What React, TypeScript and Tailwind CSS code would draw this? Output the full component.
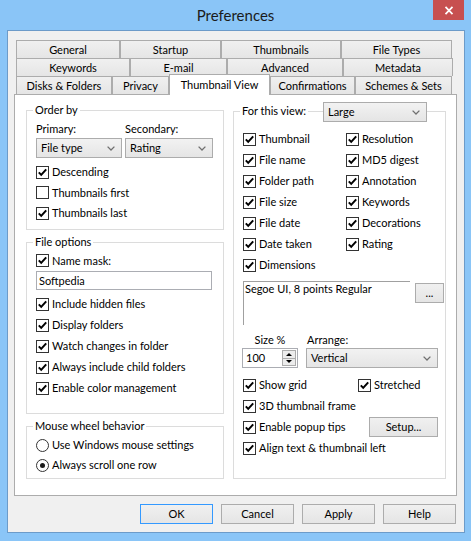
import React from "react";

function Check({ checked = true }: { checked?: boolean }) {
  return (
    <span className="w-[13px] h-[13px] shrink-0 border border-[#333333] bg-white flex items-center justify-center">
      {checked && (
        <svg width="11" height="11" viewBox="0 0 11 11">
          <path d="M1.8 5.4 L4.2 7.9 L9.2 2.3" stroke="#000" strokeWidth="2" fill="none" />
        </svg>
      )}
    </span>
  );
}

function CheckRow({
  label,
  checked = true,
  h = "h-[21px]",
  className = "",
}: {
  label: string;
  checked?: boolean;
  h?: string;
  className?: string;
}) {
  return (
    <div className={`flex items-center whitespace-nowrap ${h} ${className}`}>
      <Check checked={checked} />
      <span className="ml-[3px]">{label}</span>
    </div>
  );
}

function Radio({ label, selected = false }: { label: string; selected?: boolean }) {
  return (
    <div className="flex items-center h-[20px] whitespace-nowrap">
      <span className="w-[13px] h-[13px] shrink-0 rounded-full border border-[#333333] bg-white flex items-center justify-center">
        {selected && <span className="w-[5px] h-[5px] rounded-full bg-[#1a1a1a]" />}
      </span>
      <span className="ml-[3px]">{label}</span>
    </div>
  );
}

function Chevron() {
  return (
    <svg width="8" height="5" viewBox="0 0 8 5">
      <path d="M0.6 0.6 L4 4 L7.4 0.6" stroke="#707070" strokeWidth="1.3" fill="none" />
    </svg>
  );
}

function Select({ value, className = "" }: { value: string; className?: string }) {
  return (
    <div
      className={`h-[20px] border border-[#acacac] bg-linear-to-b from-[#f2f2f2] to-[#e5e5e5] flex items-center justify-between pl-[4px] pr-[6px] ${className}`}
    >
      <span>{value}</span>
      <Chevron />
    </div>
  );
}

function Btn({ label, className = "" }: { label: string; className?: string }) {
  return (
    <div
      className={`h-[20px] border bg-linear-to-b from-[#f0f0f0] to-[#e5e5e5] flex items-center justify-center ${className}`}
    >
      {label}
    </div>
  );
}

const row1 = [
  ["General", "w-[104px]"],
  ["Startup", "w-[101px]"],
  ["Thumbnails", "w-[120px]"],
  ["File Types", "w-[111px]"],
];
const row2 = [
  ["Keywords", "w-[114px]"],
  ["E-mail", "w-[97px]"],
  ["Advanced", "w-[116px]"],
  ["Metadata", "w-[110px]"],
];
const row3 = [
  ["Disks & Folders", "w-[96px]", false],
  ["Privacy", "w-[57px]", false],
  ["Thumbnail View", "w-[101px]", true],
  ["Confirmations", "w-[85px]", false],
  ["Schemes & Sets", "w-[97px]", false],
] as const;

function Tab({ label, w }: { label: string; w: string }) {
  return (
    <div
      className={`h-[18px] border border-b-0 border-[#acacac] bg-linear-to-b from-[#f0f0f0] to-[#e5e5e5] flex items-center justify-center whitespace-nowrap ${w}`}
    >
      {label}
    </div>
  );
}

export default function App() {
  return (
    <div className="w-[471px] h-[541px] bg-[#8ac5f7] font-['Lato',sans-serif] text-[11px] leading-[14px] text-black overflow-hidden">
      {/* title bar */}
      <div className="relative h-[30px] flex items-center justify-center">
        <span className="text-[15px] leading-[20px] text-[#1b1b1b]">Preferences</span>
        <div className="absolute right-[7px] top-0 w-[31px] h-[20px] bg-[#c75050] flex items-center justify-center">
          <svg width="10" height="9" viewBox="0 0 10 9">
            <path d="M1.5 0.8 L8.5 8.2 M8.5 0.8 L1.5 8.2" stroke="white" strokeWidth="1.7" />
          </svg>
        </div>
      </div>

      {/* client area */}
      <div className="ml-[7px] w-[458px] h-[503px] border border-[#6c9bc9] bg-[#f0f0f0] pt-[9px]">
        <div className="ml-[6px] w-[443px]">
          {/* tabs */}
          <div className="ml-[2px]">
            <div className="flex">
              {row1.map(([l, w]) => (
                <Tab key={l} label={l} w={w} />
              ))}
            </div>
            <div className="flex">
              {row2.map(([l, w]) => (
                <Tab key={l} label={l} w={w} />
              ))}
            </div>
            <div className="flex items-end h-[18px]">
              {row3.map(([l, w, sel]) =>
                sel ? (
                  <div
                    key={l}
                    className={`relative z-10 h-[21px] -mb-[1px] border border-b-0 border-[#acacac] bg-white flex items-center justify-center whitespace-nowrap ${w}`}
                  >
                    {l}
                  </div>
                ) : (
                  <Tab key={l} label={l} w={w} />
                )
              )}
            </div>
          </div>

          {/* panel */}
          <div className="h-[402px] border border-[#acacac] bg-white flex pl-[11px] pt-[8px]">
            {/* left column */}
            <div className="w-[198px] flex flex-col">
              <fieldset className="border border-[#dcdcdc] h-[127px] min-w-0">
                <legend className="ml-[6px] px-[2px] leading-[14px]">Order by</legend>
                <div className="pl-[9px] pt-[4px]">
                  <div className="grid grid-cols-[86px_88px] gap-x-[3px] gap-y-[1px]">
                    <div className="h-[16px] leading-[16px]">Primary:</div>
                    <div className="h-[16px] leading-[16px]">Secondary:</div>
                    <Select value="File type" />
                    <Select value="Rating" />
                  </div>
                  <div className="mt-[4px]">
                    <CheckRow label="Descending" h="h-[20.5px]" />
                    <CheckRow label="Thumbnails first" checked={false} h="h-[20.5px]" />
                    <CheckRow label="Thumbnails last" h="h-[20.5px]" />
                  </div>
                </div>
              </fieldset>

              <fieldset className="mt-[5px] border border-[#dcdcdc] h-[179px] min-w-0">
                <legend className="ml-[6px] px-[2px] leading-[14px]">File options</legend>
                <div className="pl-[9px] pt-[1px]">
                  <CheckRow label="Name mask:" />
                  <div className="h-[19px] w-[176px] border border-[#abadb3] bg-white pl-[2px] flex items-center">
                    Softpedia
                  </div>
                  <div className="mt-[3.5px]">
                    <CheckRow label="Include hidden files" />
                    <CheckRow label="Display folders" />
                    <CheckRow label="Watch changes in folder" />
                    <CheckRow label="Always include child folders" />
                    <CheckRow label="Enable color management" />
                  </div>
                </div>
              </fieldset>

              <fieldset className="mt-[5px] border border-[#dcdcdc] h-[60px] min-w-0">
                <legend className="ml-[6px] px-[2px] leading-[14px]">Mouse wheel behavior</legend>
                <div className="pl-[9px] pt-[2px]">
                  <Radio label="Use Windows mouse settings" />
                  <Radio label="Always scroll one row" selected />
                </div>
              </fieldset>
            </div>

            {/* right column */}
            <div className="relative ml-[9px] mt-[1px] w-[213px]">
              <fieldset className="border border-[#dcdcdc] h-[375px] min-w-0">
                <legend className="ml-[6px] px-[2px] leading-[14px]">For this view:</legend>
                <div className="pl-[9px] pt-[10.5px]">
                  <div className="flex">
                    <div className="w-[103px]">
                      <CheckRow label="Thumbnail" />
                      <CheckRow label="File name" />
                      <CheckRow label="Folder path" />
                      <CheckRow label="File size" />
                      <CheckRow label="File date" />
                      <CheckRow label="Date taken" />
                      <CheckRow label="Dimensions" />
                    </div>
                    <div>
                      <CheckRow label="Resolution" />
                      <CheckRow label="MD5 digest" />
                      <CheckRow label="Annotation" />
                      <CheckRow label="Keywords" />
                      <CheckRow label="Decorations" />
                      <CheckRow label="Rating" />
                    </div>
                  </div>

                  <div className="flex items-start mt-[5.5px]">
                    <div className="w-[167px] h-[44px] border-t border-l border-[#a0a0a0] pl-[1px]">
                      Segoe UI, 8 points Regular
                    </div>
                    <Btn label="..." className="ml-[5px] mt-[2px] w-[29px] border-[#acacac]" />
                  </div>

                  <div className="flex mt-[7px] -ml-[1px]">
                    <div className="w-[56px] flex flex-col">
                      <div className="h-[16px] leading-[16px] text-center">Size %</div>
                      <div className="h-[20px] border border-[#abadb3] bg-white flex items-center justify-between pl-[3px] pr-[1px]">
                        <span>100</span>
                        <div className="flex flex-col w-[14px] h-[16px] border border-[#acacac] bg-[#ececec]">
                          <div className="flex-1 flex items-center justify-center border-b border-[#acacac]">
                            <svg width="6" height="3" viewBox="0 0 6 3">
                              <path d="M0 3 L3 0 L6 3 Z" fill="#000" />
                            </svg>
                          </div>
                          <div className="flex-1 flex items-center justify-center">
                            <svg width="6" height="3" viewBox="0 0 6 3">
                              <path d="M0 0 L3 3 L6 0 Z" fill="#000" />
                            </svg>
                          </div>
                        </div>
                      </div>
                    </div>
                    <div className="ml-[8px] w-[132px] flex flex-col">
                      <div className="h-[16px] leading-[16px] pl-[1px]">Arrange:</div>
                      <Select value="Vertical" />
                    </div>
                  </div>

                  <div className="mt-[6.5px]">
                    <div className="flex">
                      <CheckRow label="Show grid" className="w-[115px]" />
                      <CheckRow label="Stretched" />
                    </div>
                    <CheckRow label="3D thumbnail frame" />
                    <div className="flex items-center">
                      <CheckRow label="Enable popup tips" className="w-[126px]" />
                      <Btn label="Setup..." className="w-[69px] border-[#acacac]" />
                    </div>
                    <CheckRow label="Align text & thumbnail left" />
                  </div>
                </div>
              </fieldset>
              <Select value="Large" className="absolute left-[90px] top-[-2px] w-[104px]" />
            </div>
          </div>
        </div>

        {/* buttons */}
        <div className="flex justify-end gap-[8px] mt-[8px] pr-[8px]">
          <Btn label="OK" className="w-[73px] border-[#3399ff]" />
          <Btn label="Cancel" className="w-[73px] border-[#acacac]" />
          <Btn label="Apply" className="w-[73px] border-[#acacac]" />
          <Btn label="Help" className="w-[73px] border-[#acacac]" />
        </div>
      </div>
    </div>
  );
}
